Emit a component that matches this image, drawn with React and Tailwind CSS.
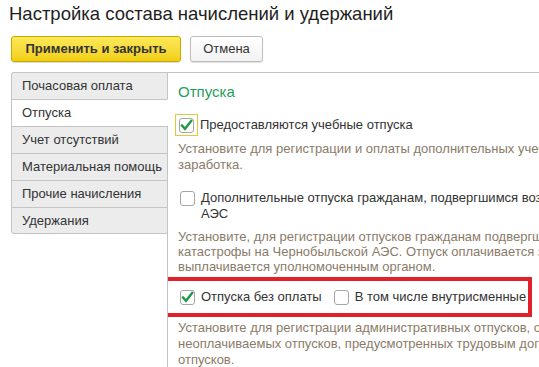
import React from 'react'

const tabs = [
  'Почасовая оплата',
  'Отпуска',
  'Учет отсутствий',
  'Материальная помощь',
  'Прочие начисления',
  'Удержания',
]

function CheckBox({ checked, focused }) {
  const box = (
    <span className="flex items-center justify-center w-[15px] h-[15px] rounded-[3px] border border-[#a6a6a6] bg-white shrink-0">
      {checked && (
        <svg width="13" height="13" viewBox="0 0 13 13">
          <path d="M2 6.5 L5 9.8 L11.2 2" fill="none" stroke="#1f9a48" strokeWidth="2.4" strokeLinecap="square" />
        </svg>
      )}
    </span>
  )
  if (focused) {
    return (
      <span className="flex items-center justify-center w-[23px] h-[22px] border border-[#e3c93a] shrink-0">{box}</span>
    )
  }
  return box
}

export default function App() {
  return (
    <div className="w-[539px] h-[367px] overflow-hidden bg-white text-[#333] font-['Liberation_Sans',Arial,sans-serif]">
      <h1 className="pl-[9px] pt-[2px] text-[18.5px] leading-[24px] text-[#1e1e1e] whitespace-nowrap">Настройка состава начислений и удержаний</h1>
      <div className="flex gap-[9px] pl-[11px] mt-[10px]">
        <button className="w-[170px] h-[26px] rounded-[3px] border border-[#c5a800] bg-gradient-to-b from-[#fde957] to-[#f2cf0a] text-[13px] font-bold text-[#333] shadow-[0_1px_1px_rgba(0,0,0,0.15)]">Применить и закрыть</button>
        <button className="w-[73px] h-[26px] rounded-[3px] border border-[#bdbdbd] bg-gradient-to-b from-white to-[#f2f2f2] text-[13px] text-[#333] shadow-[0_1px_1px_rgba(0,0,0,0.12)]">Отмена</button>
      </div>
      <div className="flex mt-[10px] ml-[11px]">
        <div className="w-[157px] flex flex-col relative z-10 -mr-px">
          {tabs.map((t, i) => (
            <div
              key={t}
              className={`h-[27px] flex items-center pl-[10px] text-[13px] text-[#333] border-l border-t border-[#c4c4c4] whitespace-nowrap ${i === 1 ? 'bg-white border-r border-r-white' : 'bg-[#ececec] border-r'} ${i === 0 ? 'rounded-tl-[3px]' : ''} ${i === tabs.length - 1 ? 'border-b rounded-bl-[3px]' : ''}`}
            >
              {t}
            </div>
          ))}
        </div>
        <div className="flex-1 h-[300px] border-l border-t border-[#c4c4c4] pl-[10px] text-[13px] overflow-hidden">
          <div className="pt-[9px] text-[15px] leading-[20px] text-[#25a05a]">Отпуска</div>
          <div className="flex items-center gap-[2px] mt-[12px] -ml-[3px]">
            <CheckBox checked focused />
            <span className="whitespace-nowrap leading-[16px]">Предоставляются учебные отпуска</span>
          </div>
          <div className="mt-[5px] text-[#8a7b69] leading-[16px] whitespace-nowrap">
            <div>Установите для регистрации и оплаты дополнительных учебных отпусков с сохранением</div>
            <div>заработка.</div>
          </div>
          <div className="flex items-start gap-[6px] mt-[17px] ml-[2px]">
            <span className="mt-[1px]"><CheckBox /></span>
            <span className="leading-[16px] whitespace-nowrap">
              <div>Дополнительные отпуска гражданам, подвергшимся воздействию радиации</div>
              <div>АЭС</div>
            </span>
          </div>
          <div className="mt-[7px] text-[#8a7b69] leading-[15px] whitespace-nowrap">
            <div>Установите, для регистрации отпусков гражданам подвергшимся воздействию радиации</div>
            <div>катастрофы на Чернобыльской АЭС. Отпуск оплачивается за счет средств бюджета и</div>
            <div>выплачивается уполномоченным органом.</div>
          </div>
          <div className="flex items-center w-[370px] h-[40px] mt-[3px] -ml-[16px] border-[4px] border-[#e3202a] pl-[14px]">
            <CheckBox checked />
            <span className="ml-[6px] whitespace-nowrap">Отпуска без оплаты</span>
            <span className="ml-[12px]"><CheckBox /></span>
            <span className="ml-[6px] whitespace-nowrap">В том числе внутрисменные</span>
          </div>
          <div className="mt-[3px] text-[#8a7b69] leading-[16px] whitespace-nowrap">
            <div>Установите для регистрации административных отпусков, отпусков без сохранения</div>
            <div>неоплачиваемых отпусков, предусмотренных трудовым договором и других</div>
            <div>отпусков.</div>
          </div>
        </div>
      </div>
    </div>
  )
}
